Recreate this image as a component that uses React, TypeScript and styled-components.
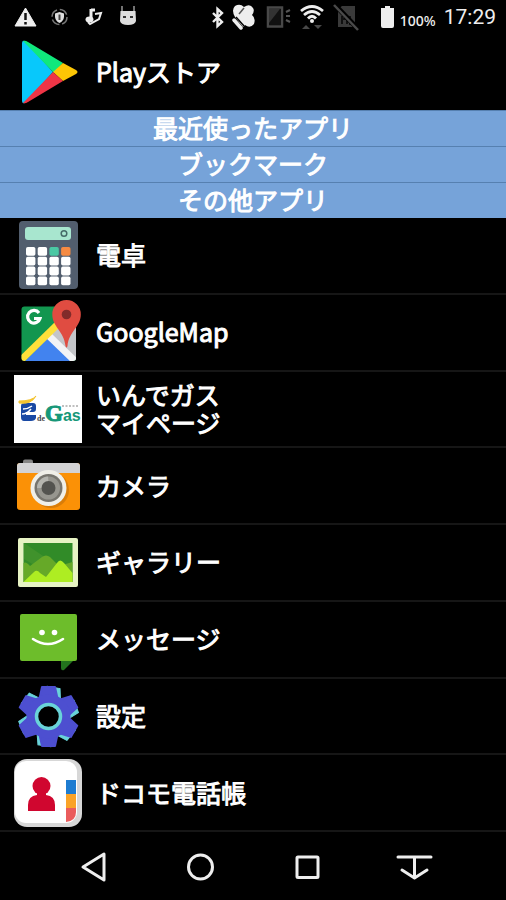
import React from "react";
import styled, { createGlobalStyle } from "styled-components";

const GlobalStyle = createGlobalStyle`
  * { box-sizing: border-box; }
  body { margin: 0; background: #000; }
  button { font: inherit; color: inherit; border: 0; background: none; padding: 0; cursor: pointer; }
`;

const Page = styled.div`
  display: flex;
  flex-direction: column;
  min-height: 100vh;
  background: #000;
  color: #fff;
  font-family: "Noto Sans CJK JP", sans-serif;
`;

const StatusBar = styled.header`
  display: flex;
  justify-content: space-between;
  align-items: center;
  height: 34px;
  padding: 0 10px 0 14px;
`;

const StatusGroup = styled.div<{ $gap: number }>`
  display: flex;
  align-items: center;
  gap: ${(p) => p.$gap}px;
`;

const StatusIcon = styled.svg`
  display: block;
  flex: none;
  height: 34px;
`;

const BatteryLevel = styled.span`
  font: 500 14px/20px "Noto Sans", sans-serif;
  padding-top: 8px;
  color: #eee;
`;

const Clock = styled.time`
  font: 400 21px/34px Roboto, sans-serif;
  color: #eee;
`;

const List = styled.ul<{ $grow?: boolean }>`
  list-style: none;
  margin: 0;
  padding: 0;
  display: grid;
  grid-auto-rows: minmax(76px, 1fr);
  flex: ${(p) => (p.$grow ? "1 0 auto" : "none")};
`;

const ListItem = styled.li<{ $line?: boolean }>`
  display: flex;
  border-bottom: ${(p) => (p.$line ? "2px solid #161616" : "0")};
`;

const AppButton = styled.button`
  display: flex;
  align-items: center;
  gap: 14px;
  width: 100%;
  padding: 0 14px;
  text-align: left;
`;

const AppIcon = styled.svg`
  display: block;
  flex: none;
  width: 68px;
  height: 68px;
`;

const AppName = styled.span`
  font-size: 25px;
  line-height: 28px;
  font-weight: 400;
  -webkit-text-stroke: 1px currentColor;
  padding-bottom: 2px;
  white-space: pre-line;
`;

const Sections = styled.div`
  display: grid;
  grid-auto-rows: 36px;
`;

const SectionButton = styled.button`
  display: flex;
  align-items: center;
  justify-content: center;
  padding-bottom: 4px;
  background: #76a3d9;
  border-top: 1px solid #5680b0;
  font-size: 25px;
  line-height: 28px;
  font-weight: 400;
  -webkit-text-stroke: 1px currentColor;
`;

const NavBar = styled.nav`
  display: grid;
  grid-template-columns: repeat(4, 1fr);
  height: 68px;
  padding: 0 39px;
`;

const NavButton = styled.button`
  display: flex;
  align-items: center;
  justify-content: center;
`;

const NavIcon = styled.svg`
  width: 40px;
  height: 40px;
  fill: none;
  stroke: #eee;
  stroke-width: 3;
  stroke-linejoin: round;
  stroke-linecap: round;
`;

const PlayIcon = () => (
  <AppIcon viewBox="0 0 68 68">
    <path d="M8 5Q8 2 11 3L39 34L11 65Q8 66 8 63Z" fill="#08c8fb" />
    <path d="M9 3Q11 2 14 4L49 25L40 35Z" fill="#10e87c" />
    <path d="M49 25L62 32Q65 34 62 36L49 43L39 34Z" fill="#fdc605" />
    <path d="M39 34L49 43L14 64Q11 66 9 65Z" fill="#ef3546" />
  </AppIcon>
);

const CalculatorIcon = () => (
  <AppIcon viewBox="0 0 68 68">
    <rect x="5" y="0" width="59" height="68" rx="4" fill="#525e6e" />
    <rect x="11" y="6" width="46" height="13" rx="3" fill="#a8e6cf" />
    <circle cx="50" cy="12.5" r="2.8" fill="none" stroke="#456b68" strokeWidth="1.5" />
    {[0, 1, 2, 3].map((row) =>
      [0, 1, 2, 3].map((col) => (
        <rect
          key={`${row}-${col}`}
          x={12 + col * 11.7}
          y={26 + row * 9.8}
          width="9.4"
          height="8.8"
          rx="1.8"
          fill={row === 0 && col === 2 ? "#4bc8a4" : row === 0 && col === 3 ? "#f68b43" : "#fff"}
        />
      ))
    )}
  </AppIcon>
);

const MapIcon = () => (
  <AppIcon viewBox="0 0 68 68">
    <clipPath id="map-tile">
      <rect x="7.5" y="8.5" width="54.5" height="54.5" rx="3" />
    </clipPath>
    <g clipPath="url(#map-tile)">
      <rect x="7" y="7" width="56" height="57" fill="#12964f" />
      <path d="M35 36L63 8V64Z" fill="#c4c5c9" />
      <path d="M10 64L35 39L60 64Z" fill="#4283ef" />
      <path d="M34 37L63 65" stroke="#f3f3f5" strokeWidth="7" />
      <path d="M5 64L47 23" stroke="#fee03a" strokeWidth="7" />
    </g>
    <path d="M25 15A6.3 6.3 0 1 0 26 20.5H20" fill="none" stroke="#fff" strokeWidth="3.2" />
    <path d="M52.5 2A14.2 14.2 0 0 0 38.3 16.500C38.3 29 50 33 51.5 48Q52.5 51 53.5 48C55 33 66.8 29 66.8 16.500A14.2 14.2 0 0 0 52.5 2Z" fill="#e04c41" />
    <circle cx="52.5" cy="16.5" r="4.8" fill="#812b2a" />
  </AppIcon>
);

const GasIcon = () => (
  <AppIcon viewBox="0 0 68 68">
    <rect width="68" height="68" fill="#fff" />
    <path d="M10 28H19Q22 28 22 31V34Q22 37 19 37H12V40H22V43Q21 46 17 46H10Q7 46 7 42V31Q7 28 10 28Z" fill="#1949a4" />
    <path d="M9 34Q14 34 18 31M8 39Q13 39 17 34" fill="none" stroke="#fff" strokeWidth="1.5" />
    <path d="M5 28Q17 30 22 21Q18 26 5 26Z" fill="#f4c430" stroke="#f4c430" />
    <text x="23" y="46" fontFamily="Liberation Serif, serif" fontSize="8" fontWeight="700" fill="#444">de</text>
    <text x="31" y="46" fontFamily="Liberation Sans, sans-serif" fontSize="16" fontWeight="700" fill="#169778">
      <tspan fontFamily="Liberation Serif, serif" fontSize="23" stroke="#169778">G</tspan>as
    </text>
    <path d="M48 31H64" stroke="#aaa" strokeWidth="1.5" strokeDasharray="2 1.5" />
  </AppIcon>
);

const CameraIcon = () => (
  <AppIcon viewBox="0 0 68 68">
    <rect x="9" y="7.5" width="10" height="8" rx="2" fill="#858585" />
    <rect x="3" y="11" width="63" height="47" rx="3" fill="#fb9106" />
    <path d="M3 21V14Q3 11 6 11H63Q66 11 66 14V21Z" fill="#d3d3d5" />
    <circle cx="37" cy="38" r="18" fill="#c46f08" opacity=".6" />
    <circle cx="34.5" cy="36" r="18" fill="#f0efe8" />
    <circle cx="34.5" cy="36" r="14" fill="#77756e" />
    <circle cx="34.5" cy="36" r="11.5" fill="#97968f" />
    <path d="M23 36A11.5 11.5 0 0 1 34 24.500L35 36Z" fill="#b5b5af" />
    <circle cx="34.5" cy="36" r="7" fill="#53534f" />
  </AppIcon>
);

const GalleryIcon = () => (
  <AppIcon viewBox="0 0 68 68">
    <rect x="4" y="10" width="60" height="49" rx="2" fill="#e7f3c4" />
    <rect x="9.5" y="15" width="49" height="39" fill="#318b28" />
    <path d="M10 15L32 30L20 37L10 31Z" fill="#4b982e" opacity=".6" />
    <path d="M9.5 35Q12 33 16 38L28 29Q32 26 36 29L45 38L58.5 34V54H9.500Z" fill="#66a928" />
    <path d="M9.5 54L20 44Q23 41 26 45L32 49L43 35Q46 30 50 35L58.5 45V54Z" fill="#aeed22" />
  </AppIcon>
);

const MessageIcon = () => (
  <AppIcon viewBox="0 0 68 68">
    <path d="M47 54H61L50 65Q47 66 47 63Z" fill="#22731d" />
    <rect x="6" y="9" width="57" height="47" rx="2" fill="#6dbd2b" />
    <circle cx="28" cy="27.5" r="2.8" fill="#fff" />
    <circle cx="40.5" cy="27.5" r="2.8" fill="#fff" />
    <path d="M19 34Q34 44 49 34" fill="none" stroke="#fff" strokeWidth="2.6" strokeLinecap="round" />
  </AppIcon>
);

const GEAR_TOOTH = "M-9 -18L-6.5 -29.500H6.500L9 -18Z";

const GearIcon = () => (
  <AppIcon viewBox="0 0 68 68">
    <g transform="translate(34.5 34.5)">
      {[0, 60, 120, 180, 240, 300].map((angle) => (
        <path
          key={angle}
          d={GEAR_TOOTH}
          transform={`rotate(${angle + (angle < 180 ? 10 : 8)})`}
          fill="#69d3d9"
          stroke="#69d3d9"
        />
      ))}
      {[0, 60, 120, 180, 240, 300].map((angle) => (
        <path key={angle} d={GEAR_TOOTH} transform={`rotate(${angle})`} fill="#4d4fd0" stroke="#4d4fd0" strokeWidth="2" strokeLinejoin="round" />
      ))}
      <circle r="17" fill="none" stroke="#4d4fd0" strokeWidth="10" />
      <circle r="12" fill="#000" stroke="#69d3d9" strokeWidth="3.5" />
    </g>
  </AppIcon>
);

const ContactsIcon = () => (
  <AppIcon viewBox="0 0 68 68">
    <rect width="68" height="68" rx="13" fill="#d7d7d7" />
    <rect x="1" y="2" width="62" height="62" rx="11" fill="#fff" />
    <circle cx="27.5" cy="27" r="9" fill="#d0062f" />
    <path d="M14 52V46Q14 37 23 36V33H32V36Q41 37 41 46V52Z" fill="#d0062f" />
    <path d="M52 21H62V35H52Z" fill="#1d7cd1" />
    <path d="M52 35H62V49H52Z" fill="#faa327" />
    <path d="M52 49H62V53Q62 62 52 63Z" fill="#ea5c5c" />
  </AppIcon>
);

const apps = [
  { name: "電卓", Icon: CalculatorIcon },
  { name: "GoogleMap", Icon: MapIcon },
  { name: "いんでガス\nマイページ", Icon: GasIcon },
  { name: "カメラ", Icon: CameraIcon },
  { name: "ギャラリー", Icon: GalleryIcon },
  { name: "メッセージ", Icon: MessageIcon },
  { name: "設定", Icon: GearIcon },
  { name: "ドコモ電話帳", Icon: ContactsIcon },
];

const sections = ["最近使ったアプリ", "ブックマーク", "その他アプリ"];

const AppRow = ({ name, Icon, line }: { name: string; Icon: React.FC; line?: boolean }) => (
  <ListItem $line={line}>
    <AppButton type="button">
      <Icon />
      <AppName>{name}</AppName>
    </AppButton>
  </ListItem>
);

const Notifications = () => (
  <StatusGroup $gap={10}>
    <StatusIcon width="24" viewBox="0 0 24 34">
      <path d="M11.5 8L22 26H1Z" fill="#eee" stroke="#eee" strokeLinejoin="round" />
      <path d="M11.5 13V20M11.5 22V24.500" stroke="#111" strokeWidth="2.5" />
    </StatusIcon>
    <StatusIcon width="24" viewBox="0 0 24 34">
      <circle cx="11.5" cy="17" r="7.5" fill="none" stroke="#777" strokeWidth="1.5" strokeDasharray="9 2.8" />
      <path d="M11.5 12L16 13.500V17Q15.5 21 11.5 23Q7.5 21 7 17V13.500Z" fill="#ddd" />
      <path d="M11.5 14.500V20" stroke="#444" strokeWidth="2" />
    </StatusIcon>
    <StatusIcon width="24" viewBox="0 0 24 34">
      <path d="M9 19V9M9 10H13" fill="none" stroke="#eee" strokeWidth="3" />
      <ellipse cx="7.5" cy="19.5" rx="4" ry="3" fill="#eee" />
      <path d="M13 14L19 13L17 19L8 24L6 22" fill="none" stroke="#eee" strokeWidth="2" />
    </StatusIcon>
    <StatusIcon width="24" viewBox="0 0 24 34">
      <path d="M6 12V6M18 12V6" stroke="#999" strokeWidth="1.5" />
      <path d="M4.5 11H19.500L20 21Q19 25 12 25Q5 25 4 21Z" fill="#ddd" />
      <path d="M7 17H10M14 17H17" stroke="#333" strokeWidth="2" />
    </StatusIcon>
  </StatusGroup>
);

const SystemStatus = () => (
  <StatusGroup $gap={8}>
    <StatusIcon width="12" viewBox="0 0 12 34">
      <path d="M1 13L10 22L5.5 26V9L10 13L1 22" fill="none" stroke="#eee" strokeWidth="2.4" />
    </StatusIcon>
    <StatusIcon width="24" viewBox="0 0 24 34">
      <path d="M3 17Q-1 10 3 6Q8 3 12 7Q18 3 21 8Q23 11 20 15Q24 18 22 24Q18 29 13 25L11 27Z" fill="#eee" />
      <path d="M2 20L9 28" stroke="#eee" strokeWidth="3.5" strokeLinecap="round" />
      <path d="M4 17L12 26" stroke="#000" strokeWidth="1.5" />
      <path d="M12 8L7 14" stroke="#555" strokeWidth="1.5" />
    </StatusIcon>
    <StatusIcon width="28" viewBox="0 0 28 34">
      <rect x="4" y="7.5" width="14" height="19" fill="none" stroke="#484848" strokeWidth="2.5" />
      <path d="M5 25V22L16 9H17V25Z" fill="#111" />
      <path d="M5 23V9H16Z" fill="#333" />
      <path d="M22 12L26 10M22 16H26M22 20L26 22" stroke="#555" strokeWidth="2" />
    </StatusIcon>
    <StatusIcon width="24" viewBox="0 0 24 34">
      <path d="M1 11Q12 2 23 11M4 15Q12 8 20 15M8 18.500Q12 14 16 18.500" fill="none" stroke="#eee" strokeWidth="2.8" />
      <circle cx="12" cy="21" r="2" fill="#eee" />
      <path d="M2 29L6 25L10 29ZM14 25H22L18 29Z" fill="#484848" />
    </StatusIcon>
    <StatusIcon width="28" viewBox="0 0 28 34">
      <path d="M5 10L10 6H23V27H6V10Z" fill="#3a3a3a" />
      <path d="M10 16V24M10 19H15V24M18 16V24H21" fill="none" stroke="#111" strokeWidth="2" />
      <path d="M3 5L27 30" stroke="#000" strokeWidth="5" />
      <path d="M2 5L26 30" stroke="#4a4a4a" strokeWidth="2.5" />
    </StatusIcon>
    <StatusGroup $gap={6}>
      <StatusIcon width="26" viewBox="0 0 26 34">
        <path d="M17 6H22V8H26V26Q26 28 24 28H15Q13 28 13 26V8H17Z" fill="#eee" />
      </StatusIcon>
      <BatteryLevel>100%</BatteryLevel>
    </StatusGroup>
    <Clock>17:29</Clock>
  </StatusGroup>
);

export default function App() {
  return (
    <Page>
      <GlobalStyle />
      <StatusBar>
        <Notifications />
        <SystemStatus />
      </StatusBar>
      <List>
        <AppRow name="Playストア" Icon={PlayIcon} />
      </List>
      <Sections>
        {sections.map((title) => (
          <SectionButton key={title} type="button">
            {title}
          </SectionButton>
        ))}
      </Sections>
      <List $grow>
        {apps.map((app) => (
          <AppRow key={app.name} {...app} line />
        ))}
      </List>
      <NavBar>
        <NavButton type="button" aria-label="戻る">
          <NavIcon viewBox="0 0 40 40">
            <path d="M31 8V34L10 21Z" />
          </NavIcon>
        </NavButton>
        <NavButton type="button" aria-label="ホーム">
          <NavIcon viewBox="0 0 40 40">
            <circle cx="20.5" cy="21" r="12" />
          </NavIcon>
        </NavButton>
        <NavButton type="button" aria-label="履歴">
          <NavIcon viewBox="0 0 40 40">
            <rect x="10" y="11" width="21" height="20.5" rx="1" />
          </NavIcon>
        </NavButton>
        <NavButton type="button" aria-label="通知を開く">
          <NavIcon viewBox="0 0 40 40">
            <path d="M4 11H37M20.5 11V31M8 24L20.5 32L33 24" />
          </NavIcon>
        </NavButton>
      </NavBar>
    </Page>
  );
}
